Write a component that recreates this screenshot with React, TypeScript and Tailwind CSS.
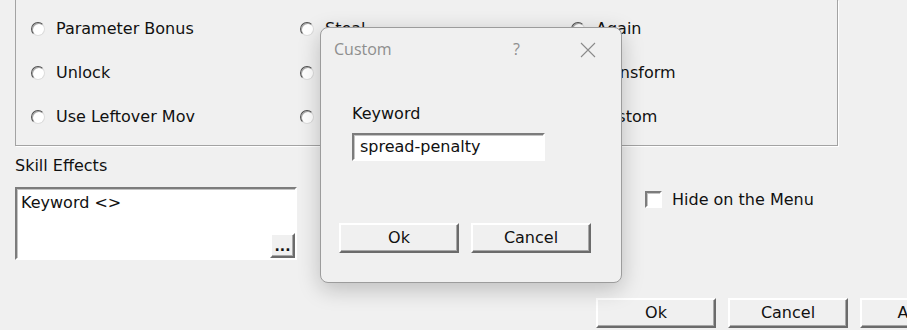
import React from 'react';

const raised =
  'border-2 border-t-white border-l-white border-r-[#6b6b6b] border-b-[#6b6b6b] shadow-[inset_-1px_-1px_0_#a8a8a8] bg-[#f0f0f0]';
const sunken =
  'border-2 border-t-[#7c7c7c] border-l-[#7c7c7c] border-r-white border-b-white bg-white shadow-[inset_1px_1px_0_#c4c4c4]';

const Radio = ({ label }: { label: string }) => (
  <div className="flex items-center h-[22px] gap-[11px]">
    <span className="w-[14px] h-[14px] shrink-0 rounded-full bg-white border border-t-[#505050] border-l-[#505050] border-r-[#dcdcdc] border-b-[#dcdcdc] shadow-[inset_1px_1px_0_#a8a8a8]" />
    <span className="leading-[20px] whitespace-nowrap">{label}</span>
  </div>
);

const WinButton = ({ label }: { label: string }) => (
  <button className={`${raised} shrink-0 w-[120px] h-[30px] flex items-center justify-center leading-none`}>
    {label}
  </button>
);

const options = [
  'Parameter Bonus', 'Steal', 'Again',
  'Unlock', 'Steal', 'Transform',
  'Use Leftover Mov', 'Steal', 'Custom',
];

export default function App() {
  return (
    <div className="relative w-[907px] h-[330px] overflow-hidden bg-[#f0f0f0] text-[16px] text-[#111] font-['DejaVu_Sans',sans-serif]">
      {/* options group (top edge is off screen) */}
      <div className="ml-[15px] w-[823px] h-[146px] border-l border-r border-b border-[#a3a3a3] shadow-[1px_1px_0_#fff]">
        <div className="grid grid-cols-[269px_271px_1fr] gap-y-[22px] pt-[18px] pl-[15px]">
          {options.map((o, i) => (
            <Radio key={i} label={o} />
          ))}
        </div>
      </div>

      <div className="flex">
        <div className="ml-[15px] w-[282px] shrink-0 mt-[10px]">
          <div className="leading-[20px]">Skill Effects</div>
          <div className={`${sunken} mt-[11px] h-[73px] relative pl-[4px] pt-[4px]`}>
            <div className="leading-[20px]">Keyword &lt;&gt;</div>
            <button className={`${raised} absolute right-0 bottom-0 w-[25px] h-[25px] flex items-end justify-center pb-[3px] text-[14px] font-bold leading-none`}>
              ...
            </button>
          </div>
        </div>
        <div className="ml-[348px] mt-[45px] flex items-center gap-[10px] h-[17px] shrink-0">
          <span className={`${sunken} w-[17px] h-[17px]`} />
          <span className="leading-[20px] whitespace-nowrap">Hide on the Menu</span>
        </div>
      </div>

      <div className="flex w-max gap-[12px] ml-[596px] mt-[38px]">
        <WinButton label="Ok" />
        <WinButton label="Cancel" />
        <WinButton label="Apply" />
      </div>

      {/* modal dialog */}
      <div className="absolute left-[320px] top-[27px] w-[302px] h-[256px] rounded-[8px] border border-[#9c9c9c] bg-[#f0f0f0] shadow-[0_6px_22px_rgba(0,0,0,0.22)]">
        <div className="relative h-[44px] font-['Open_Sans',sans-serif] text-[16px] text-[#8e8e8e]">
          <span className="absolute left-[13px] top-[9px] leading-[24px]">Custom</span>
          <span className="absolute left-[192px] top-[9px] leading-[24px]">?</span>
          <svg className="absolute left-[259px] top-[14px]" width="16" height="16" viewBox="0 0 16 16">
            <path d="M1 1 L15 15 M15 1 L1 15" stroke="#8a8a8a" strokeWidth="1.1" fill="none" />
          </svg>
        </div>
        <div className="ml-[31px] mt-[32px] leading-[20px]">Keyword</div>
        <div className={`${sunken} ml-[31px] mt-[9px] w-[193px] h-[28px] flex items-center pl-[6px]`}>
          <span className="leading-[20px]">spread-penalty</span>
        </div>
        <div className="flex gap-[12px] ml-[18px] mt-[62px]">
          <WinButton label="Ok" />
          <WinButton label="Cancel" />
        </div>
      </div>
    </div>
  );
}
